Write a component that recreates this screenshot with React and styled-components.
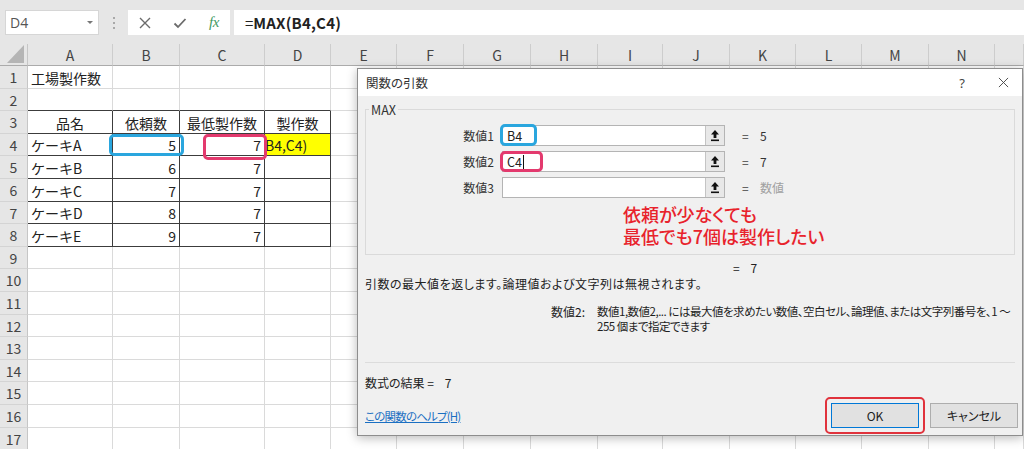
import React from 'react';
import styled, { createGlobalStyle } from 'styled-components';

const GlobalStyle = createGlobalStyle`
  html, body { margin: 0; padding: 0; }
  body {
    width: 1024px; height: 449px; overflow: hidden; background: #fff;
    font-family: "Noto Sans CJK JP", "Noto Sans", sans-serif;
  }
`;

const Page = styled.div`
  position: relative;
  width: 1024px;
  height: 449px;
  overflow: hidden;
  display: flex;
  flex-direction: column;
`;

/* ---------- formula bar ---------- */
const Toolbar = styled.div`
  flex: none;
  height: 44px;
  box-sizing: border-box;
  background: #e6e6e6;
  display: flex;
  align-items: flex-start;
  padding: 10px 0 0 5px;
`;

const NameBox = styled.div`
  width: 94px;
  height: 25px;
  box-sizing: border-box;
  background: #fff;
  border: 1px solid #d6d6d6;
  display: flex;
  align-items: center;
  justify-content: space-between;
  padding: 0 5px 0 4px;
  font: 14px "Open Sans", "Noto Sans", sans-serif;
  color: #555;
`;

const Caret = styled.span`
  width: 0;
  height: 0;
  border-left: 3px solid transparent;
  border-right: 3px solid transparent;
  border-top: 3px solid #777;
`;

const Grip = styled.div`
  width: 29px;
  height: 25px;
  display: flex;
  flex-direction: column;
  align-items: center;
  justify-content: center;
  gap: 3px;
  span { width: 2px; height: 2px; background: #a8a8a8; }
`;

const FxBox = styled.div`
  width: 102px;
  height: 25px;
  background: #fff;
  display: flex;
  align-items: center;
`;

const FxSlot = styled.div`
  width: ${(p) => p.$w}px;
  display: flex;
  justify-content: center;
  align-items: center;
  color: #6b6b6b;
`;

const FxLabel = styled.span`
  font: italic 15px "Liberation Serif", serif;
  color: #3f9a63;
  letter-spacing: -0.5px;
`;

const FormulaInput = styled.div`
  flex: 1;
  margin-left: 4px;
  height: 25px;
  background: #fff;
  display: flex;
  align-items: center;
  padding-left: 11px;
  font: 15px "Noto Sans CJK JP", sans-serif;
  color: #222;
  b { font-weight: 700; letter-spacing: 0.2px; }
`;

/* ---------- sheet ---------- */
const Sheet = styled.div`
  flex: none;
  display: grid;
  grid-template-columns: ${(p) => p.$cols};
  grid-template-rows: ${(p) => p.$rows};
`;

const Corner = styled.div`
  background: #e6e6e6;
  border-right: 1px solid #c6c6c6;
  border-bottom: 1px solid #ababab;
  display: flex;
  align-items: flex-end;
  justify-content: flex-end;
  padding: 0 3px 2px 0;
`;

const ColHead = styled.div`
  background: #e6e6e6;
  border-right: 1px solid #cdcdcd;
  border-bottom: 1px solid #ababab;
  display: flex;
  align-items: center;
  justify-content: center;
  font: 14px "Noto Sans CJK JP", sans-serif;
  color: #444;
`;

const RowHead = styled.div`
  background: #e6e6e6;
  border-right: 1px solid #c6c6c6;
  border-bottom: 1px solid #d4d4d4;
  display: flex;
  align-items: center;
  justify-content: center;
  font: 14px "Noto Sans CJK JP", sans-serif;
  color: #444;
`;

const Cell = styled.div`
  position: relative;
  background: ${(p) => p.$bg || '#fff'};
  border-right: 1px solid ${(p) => (p.$darkRight ? '#3c3c3c' : '#dadada')};
  border-bottom: 1px solid ${(p) => (p.$darkBottom ? '#3c3c3c' : '#dadada')};
  display: flex;
  align-items: center;
  justify-content: ${(p) =>
    p.$align === 'right' ? 'flex-end' : p.$align === 'center' ? 'center' : 'flex-start'};
  padding: 1px ${(p) => (p.$tight ? '0' : '3px')} 0;
  font: 14px "Noto Sans CJK JP", sans-serif;
  color: #222;
  white-space: nowrap;
  overflow: visible;
`;

const Mark = styled.span`
  position: absolute;
  z-index: 3;
  left: ${(p) => p.$l}px;
  right: ${(p) => p.$r}px;
  top: ${(p) => p.$t}px;
  bottom: ${(p) => p.$b}px;
  border: 3px solid ${(p) => p.$color};
  border-radius: 5px;
  pointer-events: none;
`;

/* ---------- dialog ---------- */
const Dialog = styled.div`
  position: absolute;
  left: 357px;
  top: 68px;
  width: 666px;
  height: 368px;
  box-sizing: border-box;
  background: #f0f0f0;
  border: 1px solid #8d8d8d;
  box-shadow: 0 2px 10px rgba(0, 0, 0, 0.28);
  display: flex;
  flex-direction: column;
  font-family: "Noto Sans CJK JP", sans-serif;
  font-feature-settings: "palt";
  font-size: 12px;
  color: #1e1e1e;
  z-index: 10;
`;

const TitleBar = styled.div`
  flex: none;
  height: 27px;
  background: #fff;
  display: flex;
  align-items: center;
  padding-left: 8px;
`;

const Title = styled.div`
  flex: 1;
  font-size: 12.5px;
  color: #333;
`;

const TitleBtn = styled.div`
  width: ${(p) => p.$w}px;
  height: 27px;
  display: flex;
  align-items: center;
  justify-content: center;
  color: #444;
  font: 13px "Noto Sans", sans-serif;
`;

const Body = styled.div`
  flex: 1;
  display: flex;
  flex-direction: column;
  padding: 13px 7px 0 7px;
`;

const GroupBox = styled.div`
  position: relative;
  height: 146px;
  box-sizing: border-box;
  border: 1px solid #dadada;
  padding-top: 15px;
`;

const Legend = styled.span`
  position: absolute;
  left: 3px;
  top: -10px;
  padding: 0 2px;
  background: #f0f0f0;
  font-size: 12.5px;
  color: #333;
`;

const ArgRow = styled.div`
  display: flex;
  align-items: center;
  height: 21px;
  margin-bottom: 5px;
`;

const ArgLabel = styled.div`
  width: 128px;
  text-align: right;
  color: #333;
`;

const ArgInput = styled.div`
  position: relative;
  margin-left: 8px;
  width: 223px;
  height: 21px;
  box-sizing: border-box;
  background: #fff;
  border: 1px solid #b4b4b4;
  display: flex;
  align-items: stretch;
`;

const ArgText = styled.div`
  flex: 1;
  display: flex;
  align-items: center;
  padding-left: 4px;
  font-size: 12.5px;
  color: #222;
`;

const TextCaret = styled.span`
  display: inline-block;
  width: 1px;
  height: 14px;
  background: #111;
  margin-left: 1px;
`;

const PickBtn = styled.div`
  width: 18px;
  background: #e8e8e8;
  border-left: 1px solid #c4c4c4;
  display: flex;
  align-items: center;
  justify-content: center;
`;

const Eq = styled.div`
  margin-left: 17px;
  width: 18px;
  color: #444;
`;

const ArgValue = styled.div`
  color: ${(p) => (p.$muted ? '#a0a0a0' : '#333')};
`;

const Note = styled.div`
  margin: 5px 0 0 257px;
  color: #e8232c;
  font-size: 18px;
  line-height: 22px;
  font-weight: 500;
`;

const Line = styled.div`
  line-height: ${(p) => p.$lh || 16}px;
  margin-top: ${(p) => p.$mt || 0}px;
  padding-left: ${(p) => p.$pl || 0}px;
  letter-spacing: ${(p) => p.$ls || 0}px;
  white-space: nowrap;
  color: #222;
`;

const HelpGrid = styled.div`
  display: grid;
  grid-template-columns: 220px 1fr;
  column-gap: 12px;
  margin-top: 12px;
  line-height: 15px;
  white-space: nowrap;
`;

const HelpKey = styled.div`
  text-align: right;
`;

const HelpText = styled.div`
  font-size: 11.5px;
  letter-spacing: -0.5px;
`;

const Rule = styled.div`
  margin-top: 28px;
  height: 1px;
  background: #dcdcdc;
`;

const Footer = styled.div`
  margin: 6px -3px 0 0;
  display: flex;
  align-items: center;
`;

const HelpLink = styled.a`
  flex: 1;
  color: #1a6fc2;
  text-decoration: underline;
  font-size: 11.5px;
  letter-spacing: -0.8px;
`;

const Highlight = styled.div`
  border: 2px solid #e0323c;
  border-radius: 5px;
  padding: 4px;
`;

const Button = styled.div`
  width: 88px;
  height: 25px;
  box-sizing: border-box;
  background: #e1e1e1;
  border: 1px solid ${(p) => (p.$primary ? '#0078d7' : '#adadad')};
  display: flex;
  align-items: center;
  justify-content: center;
  font-size: 12px;
  color: #222;
  margin-left: ${(p) => p.$ml || 0}px;
`;

/* ---------- icons ---------- */
const PickIcon = () => (
  <svg width="10" height="13" viewBox="0 0 10 13">
    <path d="M5 1 L1 5.5 H3.6 V9 H6.4 V5.5 H9 Z" fill="#111" />
    <rect x="1" y="10.5" width="8" height="1.6" fill="#111" />
  </svg>
);

const XIcon = ({ size = 12, color = '#6b6b6b', sw = 1.4 }) => (
  <svg width={size} height={size} viewBox="0 0 12 12">
    <path d="M1 1 L11 11 M11 1 L1 11" stroke={color} strokeWidth={sw} fill="none" />
  </svg>
);

const CheckIcon = () => (
  <svg width="14" height="12" viewBox="0 0 14 12">
    <path d="M1.5 6.5 L5 10 L12.5 2" stroke="#6b6b6b" strokeWidth="1.8" fill="none" />
  </svg>
);

const CornerIcon = () => (
  <svg width="17" height="18" viewBox="0 0 17 18">
    <path d="M17 0 V18 H0 Z" fill="#b5b5b5" />
  </svg>
);

/* ---------- data ---------- */
const colWidths = [28, 85, 67, 85, 66, 66, 67, 67, 67, 65, 67, 66, 66, 67, 66];
const colLetters = ['A', 'B', 'C', 'D', 'E', 'F', 'G', 'H', 'I', 'J', 'K', 'L', 'M', 'N', ''];
const ROWS = 17;

const data = {
  1: [{ t: '工場製作数' }],
  3: [{ t: '品名', a: 'center' }, { t: '依頼数', a: 'center' }, { t: '最低製作数', a: 'center' }, { t: '製作数', a: 'center' }],
  4: [{ t: 'ケーキA' }, { t: '5', a: 'right', mark: 'blue' }, { t: '7', a: 'right', mark: 'pink' }, { t: 'B4,C4)', bg: '#ffff00', tight: true }],
  5: [{ t: 'ケーキB' }, { t: '6', a: 'right' }, { t: '7', a: 'right' }, { t: '' }],
  6: [{ t: 'ケーキC' }, { t: '7', a: 'right' }, { t: '7', a: 'right' }, { t: '' }],
  7: [{ t: 'ケーキD' }, { t: '8', a: 'right' }, { t: '7', a: 'right' }, { t: '' }],
  8: [{ t: 'ケーキE' }, { t: '9', a: 'right' }, { t: '7', a: 'right' }, { t: '' }],
};

const marks = {
  blue: { l: -4, r: -5, t: 0, b: -1, color: '#2aa6de' },
  pink: { l: 23, r: -3, t: 0, b: -5, color: '#e33a6e' },
};

function rowHeights() {
  const hs = ['22px'];
  for (let i = 0; i < ROWS; i++) {
    hs.push(`${Math.round(66 + 22.6 * (i + 1)) - Math.round(66 + 22.6 * i)}px`);
  }
  return hs.join(' ');
}

export default function App() {
  const cols = colWidths.map((w) => `${w}px`).join(' ') + ' 1fr';
  const cells = [];
  cells.push(
    <Corner key="corner">
      <CornerIcon />
    </Corner>
  );
  colLetters.forEach((c, i) => cells.push(<ColHead key={`h${i}`}>{c}</ColHead>));
  for (let r = 1; r <= ROWS; r++) {
    cells.push(<RowHead key={`r${r}`}>{r}</RowHead>);
    const rowData = data[r] || [];
    for (let c = 0; c < colLetters.length; c++) {
      const d = rowData[c] || {};
      const inTable = r >= 3 && r <= 8 && c < 4;
      const aboveTable = r === 2 && c < 4;
      const m = d.mark ? marks[d.mark] : null;
      cells.push(
        <Cell
          key={`c${r}-${c}`}
          $align={d.a}
          $bg={d.bg}
          $tight={d.tight}
          $darkRight={inTable}
          $darkBottom={inTable || aboveTable}
        >
          {d.t}
          {m && <Mark $l={m.l} $r={m.r} $t={m.t} $b={m.b} $color={m.color} />}
        </Cell>
      );
    }
  }

  return (
    <Page>
      <GlobalStyle />
      <Toolbar>
        <NameBox>
          <span>D4</span>
          <Caret />
        </NameBox>
        <Grip>
          <span />
          <span />
          <span />
        </Grip>
        <FxBox>
          <FxSlot $w={34}>
            <XIcon />
          </FxSlot>
          <FxSlot $w={36}>
            <CheckIcon />
          </FxSlot>
          <FxSlot $w={32}>
            <FxLabel>fx</FxLabel>
          </FxSlot>
        </FxBox>
        <FormulaInput>
          =<b>MAX(B4,C4)</b>
        </FormulaInput>
      </Toolbar>

      <Sheet $cols={cols} $rows={rowHeights()}>
        {cells}
      </Sheet>

      <Dialog>
        <TitleBar>
          <Title>関数の引数</Title>
          <TitleBtn $w={44}>?</TitleBtn>
          <TitleBtn $w={38}>
            <XIcon size={11} color="#444" sw={1} />
          </TitleBtn>
        </TitleBar>
        <Body>
          <GroupBox>
            <Legend>MAX</Legend>
            <ArgRow>
              <ArgLabel>数値1</ArgLabel>
              <ArgInput>
                <ArgText>B4</ArgText>
                <PickBtn>
                  <PickIcon />
                </PickBtn>
                <Mark $l={-3} $r={187} $t={-2} $b={-1} $color="#2aa6de" />
              </ArgInput>
              <Eq>=</Eq>
              <ArgValue>5</ArgValue>
            </ArgRow>
            <ArgRow>
              <ArgLabel>数値2</ArgLabel>
              <ArgInput>
                <ArgText>
                  C4
                  <TextCaret />
                </ArgText>
                <PickBtn>
                  <PickIcon />
                </PickBtn>
                <Mark $l={-3} $r={181} $t={-1} $b={-1} $color="#e33a6e" />
              </ArgInput>
              <Eq>=</Eq>
              <ArgValue>7</ArgValue>
            </ArgRow>
            <ArgRow>
              <ArgLabel>数値3</ArgLabel>
              <ArgInput>
                <ArgText />
                <PickBtn>
                  <PickIcon />
                </PickBtn>
              </ArgInput>
              <Eq>=</Eq>
              <ArgValue $muted>数値</ArgValue>
            </ArgRow>
            <Note>
              依頼が少なくても
              <br />
              最低でも7個は製作したい
            </Note>
          </GroupBox>

          <Line $mt={5} $pl={368}>
            =&nbsp;&nbsp;&nbsp; 7
          </Line>
          <Line $ls={0.5}>引数の最大値を返します。論理値および文字列は無視されます。</Line>

          <HelpGrid>
            <HelpKey>数値2:</HelpKey>
            <HelpText>
              数値1,数値2,... には最大値を求めたい数値、空白セル、論理値、または文字列番号を、1 ～
              <br />
              255 個まで指定できます
            </HelpText>
          </HelpGrid>

          <Rule />
          <Line $mt={12}>数式の結果 =&nbsp;&nbsp;&nbsp; 7</Line>

          <Footer>
            <HelpLink>この関数のヘルプ(H)</HelpLink>
            <Highlight>
              <Button $primary>OK</Button>
            </Highlight>
            <Button $ml={5}>キャンセル</Button>
          </Footer>
        </Body>
      </Dialog>
    </Page>
  );
}
